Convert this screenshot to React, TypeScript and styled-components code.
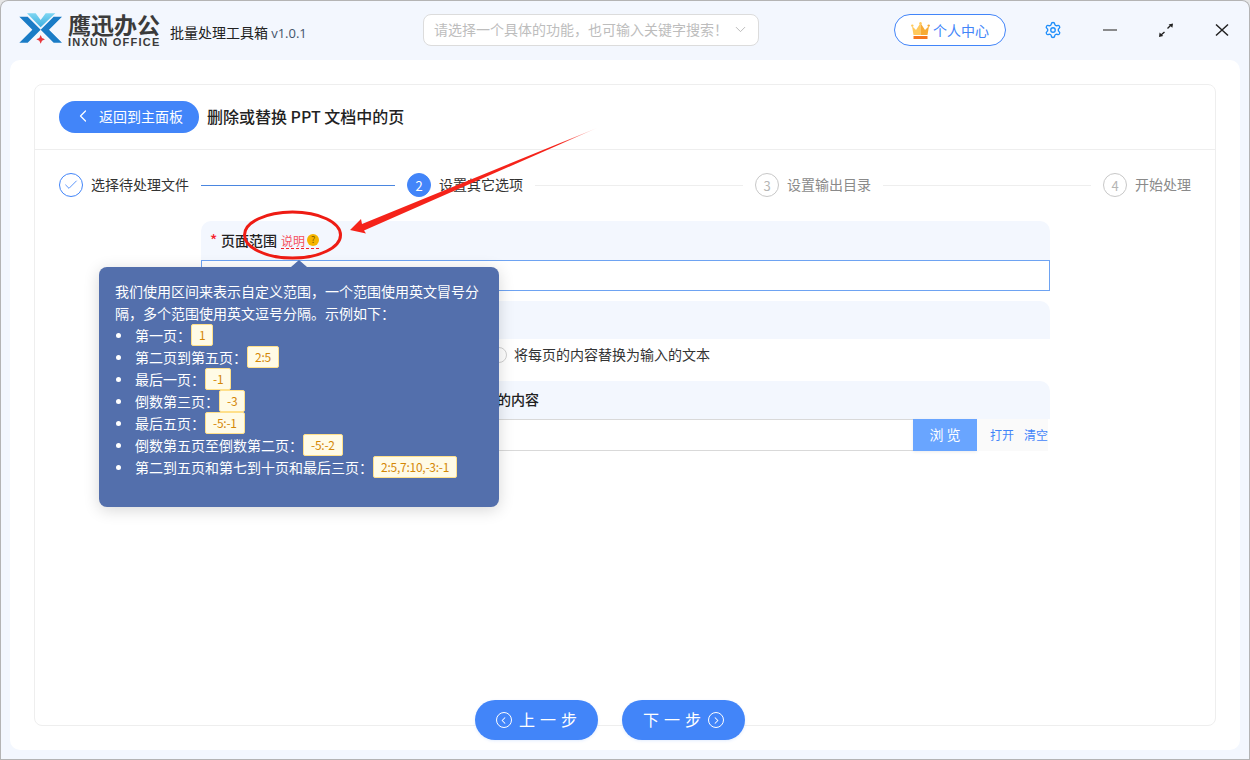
import React from "react";
import styled, { createGlobalStyle } from "styled-components";
import { Settings, ChevronLeft, ChevronRight, ChevronDown, Check } from "lucide-react";

const Global = createGlobalStyle`
  html, body { margin: 0; padding: 0; background: #e6e6e6; }
  body { font-family: "Noto Sans CJK SC", "Noto Sans", sans-serif; color: #333; }
  * { box-sizing: border-box; }
`;

const Window = styled.div`
  position: relative;
  width: 1250px;
  height: 760px;
  overflow: hidden;
  display: flex;
  flex-direction: column;
  background: #f3f7fe;
  border-radius: 8px 8px 0 0;
  box-shadow: inset 0 0 0 1px #b4b4b4;
`;

const TopBar = styled.header`
  height: 60px;
  flex: none;
  display: flex;
  align-items: center;
  padding-left: 17px;
`;

const Brand = styled.div`
  display: flex;
  align-items: center;
  gap: 3px;
  margin-top: -1px;
`;

const BrandText = styled.div`
  display: flex;
  flex-direction: column;
  width: 92px;
`;

const BrandName = styled.span`
  font-size: 23px;
  line-height: 25px;
  font-weight: 700;
  color: #3b3b3b;
`;

const BrandSub = styled.span`
  font-family: "Liberation Sans", sans-serif;
  font-size: 11px;
  line-height: 10px;
  font-weight: 700;
  letter-spacing: 1.25px;
  color: #3b3b3b;
  white-space: nowrap;
`;

const AppTitle = styled.div`
  margin-left: 10px;
  margin-top: 4px;
  width: 137px;
  font-size: 14px;
  color: #222;
  white-space: nowrap;
`;

const Version = styled.span`
  font-family: "Open Sans", sans-serif;
  font-size: 13px;
  color: #44546a;
`;

const Search = styled.div`
  margin-left: 116px;
  width: 336px;
  height: 32px;
  display: flex;
  align-items: center;
  justify-content: space-between;
  padding: 0 9px 2px 10px;
  background: #fff;
  border: 1px solid #dcdcdc;
  border-radius: 8px;
  font-size: 14px;
  color: #bdbdbd;
  white-space: nowrap;
`;

const Profile = styled.button`
  margin-left: 135px;
  width: 112px;
  height: 32px;
  padding: 0 0 0 16px;
  display: flex;
  align-items: center;
  gap: 3px;
  background: #fff;
  border: 1px solid #4285f9;
  border-radius: 16px;
  color: #4285f9;
  font: inherit;
  font-size: 14px;
`;

const GearButton = styled.div`
  margin-left: 38px;
  width: 18px;
  height: 18px;
  display: flex;
  color: #1f8efa;
`;

const WinButton = styled.div`
  margin-left: 40px;
  width: 16px;
  height: 16px;
  display: flex;
`;

const Main = styled.main`
  flex: 1;
  min-height: 0;
  margin: 0 10px 10px;
  padding: 24px;
  display: flex;
  flex-direction: column;
  background: #fff;
  border-radius: 10px;
`;

const Card = styled.section`
  flex: 1;
  min-height: 0;
  border: 1px solid #eeeeee;
  border-radius: 8px;
  display: flex;
  flex-direction: column;
`;

const CardHead = styled.div`
  display: flex;
  align-items: center;
  gap: 8px;
  padding: 16px 24px;
  border-bottom: 1px solid #eeeeee;
`;

const BackButton = styled.button`
  width: 140px;
  height: 32px;
  display: flex;
  align-items: center;
  gap: 6px;
  padding: 0 0 2px 14px;
  background: #4285f9;
  color: #fff;
  border: 0;
  border-radius: 16px;
  font: inherit;
  font-size: 14px;
`;

const PageTitle = styled.h1`
  margin: 0;
  padding-bottom: 2px;
  font-size: 16px;
  line-height: 24px;
  font-weight: 500;
  color: #222;
  white-space: pre;
`;

const Steps = styled.div`
  display: flex;
  padding: 23px 24px 24px;
`;

const Step = styled.div<{ $last?: boolean }>`
  flex: ${(p) => (p.$last ? "none" : "1")};
  display: flex;
  align-items: center;
  gap: 8px;
  padding-right: ${(p) => (p.$last ? "0" : "12px")};
`;

const StepDot = styled.div<{ $state: "done" | "active" | "todo" }>`
  width: 24px;
  height: 24px;
  flex: none;
  display: flex;
  align-items: center;
  justify-content: center;
  border-radius: 50%;
  font-size: 13px;
  background: ${(p) => (p.$state === "active" ? "#4285f9" : "#fff")};
  color: ${(p) => (p.$state === "active" ? "#fff" : p.$state === "done" ? "#4285f9" : "#b5b5b5")};
  border: 1px solid ${(p) => (p.$state === "todo" ? "#c8c8c8" : "#4285f9")};
`;

const StepLabel = styled.span<{ $muted?: boolean }>`
  padding-bottom: 2px;
  font-size: 14px;
  line-height: 22px;
  white-space: nowrap;
  color: ${(p) => (p.$muted ? "#8a8a8a" : "#333")};
`;

const StepLine = styled.div<{ $on?: boolean }>`
  flex: 1;
  height: 1px;
  margin-left: 4px;
  background: ${(p) => (p.$on ? "#4a86e0" : "#eeeeee")};
`;

const Form = styled.div`
  width: 849px;
  margin-left: 166px;
  display: flex;
  flex-direction: column;
  gap: 10px;
`;

const Section = styled.div``;

const SectionHead = styled.div<{ $tall?: boolean; $indent?: number }>`
  height: ${(p) => (p.$tall ? "39px" : "38px")};
  display: flex;
  align-items: center;
  padding: 0 0 2px ${(p) => p.$indent ?? 9}px;
  background: #f3f7fe;
  border-radius: 10px 10px 0 0;
  font-size: 14px;
  font-weight: 500;
  color: #222;
  white-space: nowrap;
`;

const Star = styled.span`
  width: 11px;
  color: #f5222d;
  font-size: 15px;
`;

const Hint = styled.span`
  position: relative;
  margin-left: 4px;
  display: inline-flex;
  align-items: center;
  gap: 2px;
  height: 17px;
  margin-top: 2px;
  border-bottom: 1px dashed #f5222d;
  color: #f5515f;
  font-size: 12px;
  font-weight: 400;
`;

const HintIcon = styled.span`
  width: 12px;
  height: 12px;
  border-radius: 50%;
  background: #f5b400;
  color: #7a5a00;
  font-size: 9px;
  line-height: 12px;
  text-align: center;
`;

const Tip = styled.div`
  position: absolute;
  top: 35px;
  left: 50%;
  z-index: 5;
  width: 400px;
  height: 240px;
  margin-left: -201px;
  padding: 13px 16px 29px;
  background: #536fac;
  border-radius: 8px;
  box-shadow: 0 3px 16px rgba(0, 0, 0, 0.16);
  color: #fff;
  font-size: 14px;
  line-height: 22px;
  white-space: normal;

  &::before {
    content: "";
    position: absolute;
    top: -7px;
    left: 192px;
    border-left: 8px solid transparent;
    border-right: 8px solid transparent;
    border-bottom: 7px solid #536fac;
  }
`;

const TipList = styled.ul`
  margin: 0;
  padding: 0 0 0 20px;
  list-style: none;
`;

const TipItem = styled.li`
  display: flex;
  align-items: center;
  height: 22px;
  white-space: nowrap;

  &::before {
    content: "";
    flex: none;
    width: 5px;
    height: 5px;
    margin-left: -19px;
    margin-right: 14px;
    border-radius: 50%;
    background: #fff;
  }
`;

const Code = styled.code`
  display: inline-block;
  height: 22px;
  padding: 0 7px;
  font-family: inherit;
  font-size: 12px;
  line-height: 20px;
  letter-spacing: -0.25px;
  color: #d48806;
  background: #fffbe6;
  border: 1px solid #ffe08a;
  border-radius: 2px;
`;

const TextInput = styled.div`
  height: 31px;
  border: 1px solid #6ea3f2;
`;

const RadioRow = styled.div`
  height: 32px;
  display: flex;
  align-items: center;
  padding-left: 290px;
`;

const RadioOption = styled.label`
  display: flex;
  align-items: center;
  gap: 7px;
  font-size: 14px;
  color: #333;
`;

const RadioText = styled.span`
  padding-bottom: 2px;
`;

const RadioMark = styled.span`
  width: 16px;
  height: 16px;
  flex: none;
  border: 1px solid #d0d0d0;
  border-radius: 50%;
  background: #fff;
`;

const FileRow = styled.div`
  height: 32px;
  display: flex;
  padding-right: 2px;
`;

const FileInput = styled.div`
  flex: 1;
  border-top: 1px solid #d9d9d9;
  border-bottom: 1px solid #d9d9d9;
`;

const Browse = styled.button`
  width: 64px;
  border: 0;
  padding: 0 0 2px;
  background: #69a5ff;
  color: #fff;
  font: inherit;
  font-size: 14px;
  box-shadow: 0 1px 3px rgba(0, 0, 0, 0.08);
`;

const FileLinks = styled.div`
  width: 71px;
  display: flex;
  align-items: center;
  gap: 10px;
  padding: 0 0 2px 13px;
  background: #fafafa;
  color: #4285f9;
  font-size: 12px;
  white-space: nowrap;
`;

const Footer = styled.div`
  flex: none;
  height: 40px;
  margin: -26px 0 -14px 441px;
  display: flex;
  gap: 24px;
`;

const StepButton = styled.button`
  width: 123px;
  height: 40px;
  padding: 0;
  display: flex;
  align-items: center;
  justify-content: center;
  gap: 7px;
  background: #4285f9;
  color: #fff;
  border: 0;
  border-radius: 20px;
  font: inherit;
  font-size: 16px;
  letter-spacing: 5px;
  box-shadow: 0 1px 3px rgba(66, 133, 249, 0.15);
`;

const ButtonText = styled.span`
  margin-right: -5px;
  padding-bottom: 2px;
  line-height: 38px;
`;

const CircleIcon = styled.span`
  width: 16px;
  height: 16px;
  flex: none;
  display: flex;
  align-items: center;
  justify-content: center;
  border: 1.5px solid #fff;
  border-radius: 50%;
`;

const Annotations = styled.svg`
  position: absolute;
  inset: 0;
  z-index: 4;
  pointer-events: none;
`;

const Logo = () => (
  <svg width="48" height="40" viewBox="20 20 144 120" aria-hidden="true">
    <defs>
      <linearGradient id="lg" x1="0" y1="0" x2="0" y2="1">
        <stop offset="0" stopColor="#7fd6f2" />
        <stop offset="1" stopColor="#3aaee0" />
      </linearGradient>
    </defs>
    <path d="M27 40H52L91 79L52 118H27L66 79Z" fill="#1a7cc6" />
    <path d="M155 40H130L91 79L130 118H155L116 79Z" fill="#1a7cc6" />
    <path d="M50 30H76L91 50L106 30H135L91 72Z" fill="url(#lg)" />
    <path d="M91 95L95 104L104 108L95 112L91 121L87 112L78 108L87 104Z" fill="#e8383d" />
  </svg>
);

const Crown = () => (
  <svg width="19" height="17" viewBox="0 0 19 17" aria-hidden="true">
    <path d="M1 4L5 8L9.5 1L9.5 13H2.5Z" fill="#ffc95c" />
    <path d="M18 4L14 8L9.5 1L9.5 13H16.5Z" fill="#f7ab35" />
    <circle cx="1.3" cy="3.6" r="1.2" fill="#ffc95c" />
    <circle cx="9.5" cy="1.3" r="1.2" fill="#ffc95c" />
    <circle cx="17.7" cy="3.6" r="1.2" fill="#f7ab35" />
    <rect x="2.5" y="14" width="14" height="3" fill="#f5761f" />
  </svg>
);

const MaximizeIcon = () => (
  <svg width="16" height="16" viewBox="0 0 16 16" aria-hidden="true">
    <path d="M3 13L6.5 10M9.5 6.5L13 3" stroke="#222" strokeWidth="1.4" fill="none" />
    <path d="M1 15L1.6 10.6L5.2 14Z" fill="#222" />
    <path d="M15 1.4L14.4 5.8L10.6 2.4Z" fill="#222" />
  </svg>
);

const MinimizeIcon = () => (
  <svg width="16" height="16" viewBox="0 0 16 16" aria-hidden="true">
    <path d="M1 8H15" stroke="#666" strokeWidth="1.6" />
  </svg>
);

const CloseIcon = () => (
  <svg width="16" height="16" viewBox="0 0 16 16" aria-hidden="true">
    <path d="M2 2.5L14 13.5M14 2.5L2 13.5" stroke="#222" strokeWidth="1.5" />
  </svg>
);

const tipRows: [string, string][] = [
  ["第一页：", "1"],
  ["第二页到第五页：", "2:5"],
  ["最后一页：", "-1"],
  ["倒数第三页：", "-3"],
  ["最后五页：", "-5:-1"],
  ["倒数第五页至倒数第二页：", "-5:-2"],
  ["第二到五页和第七到十页和最后三页：", "2:5,7:10,-3:-1"],
];

export default function App() {
  return (
    <>
      <Global />
      <Window>
        <TopBar>
          <Brand>
            <Logo />
            <BrandText>
              <BrandName>鹰迅办公</BrandName>
              <BrandSub>INXUN OFFICE</BrandSub>
            </BrandText>
          </Brand>
          <AppTitle>
            批量处理工具箱 <Version>v1.0.1</Version>
          </AppTitle>
          <Search>
            <span>请选择一个具体的功能，也可输入关键字搜索！</span>
            <ChevronDown size={17} strokeWidth={1.3} color="#b5b5b5" />
          </Search>
          <Profile>
            <Crown />
            <span>个人中心</span>
          </Profile>
          <GearButton>
            <Settings size={18} strokeWidth={1.8} />
          </GearButton>
          <WinButton>
            <MinimizeIcon />
          </WinButton>
          <WinButton>
            <MaximizeIcon />
          </WinButton>
          <WinButton>
            <CloseIcon />
          </WinButton>
        </TopBar>
        <Main>
          <Card>
            <CardHead>
              <BackButton>
                <ChevronLeft size={20} strokeWidth={1.5} />
                <span>返回到主面板</span>
              </BackButton>
              <PageTitle>删除或替换 PPT 文档中的页</PageTitle>
            </CardHead>
            <Steps>
              <Step>
                <StepDot $state="done">
                  <Check size={16} strokeWidth={1.3} />
                </StepDot>
                <StepLabel>选择待处理文件</StepLabel>
                <StepLine $on />
              </Step>
              <Step>
                <StepDot $state="active">2</StepDot>
                <StepLabel>设置其它选项</StepLabel>
                <StepLine />
              </Step>
              <Step>
                <StepDot $state="todo">3</StepDot>
                <StepLabel $muted>设置输出目录</StepLabel>
                <StepLine />
              </Step>
              <Step $last>
                <StepDot $state="todo">4</StepDot>
                <StepLabel $muted>开始处理</StepLabel>
              </Step>
            </Steps>
            <Form>
              <Section>
                <SectionHead $tall>
                  <Star>*</Star>
                  页面范围
                  <Hint>
                    说明
                    <HintIcon>?</HintIcon>
                    <Tip>
                      我们使用区间来表示自定义范围，一个范围使用英文冒号分隔，多个范围使用英文逗号分隔。示例如下：
                      <TipList>
                        {tipRows.map(([label, code]) => (
                          <TipItem key={code}>
                            {label}
                            <Code>{code}</Code>
                          </TipItem>
                        ))}
                      </TipList>
                    </Tip>
                  </Hint>
                </SectionHead>
                <TextInput />
              </Section>
              <Section>
                <SectionHead />
                <RadioRow>
                  <RadioOption>
                    <RadioMark />
                    <RadioText>将每页的内容替换为输入的文本</RadioText>
                  </RadioOption>
                </RadioRow>
              </Section>
              <Section>
                <SectionHead $indent={296}>的内容</SectionHead>
                <FileRow>
                  <FileInput />
                  <Browse>浏 览</Browse>
                  <FileLinks>
                    <span>打开</span>
                    <span>清空</span>
                  </FileLinks>
                </FileRow>
              </Section>
            </Form>
          </Card>
          <Footer>
            <StepButton>
              <CircleIcon>
                <ChevronLeft size={11} strokeWidth={2.2} />
              </CircleIcon>
              <ButtonText>上一步</ButtonText>
            </StepButton>
            <StepButton>
              <ButtonText>下一步</ButtonText>
              <CircleIcon>
                <ChevronRight size={11} strokeWidth={2.2} />
              </CircleIcon>
            </StepButton>
          </Footer>
        </Main>
        <Annotations width="1250" height="760" viewBox="0 0 1250 760" aria-hidden="true">
          <defs>
            <linearGradient id="arrowFade" gradientUnits="userSpaceOnUse" x1="350" y1="230" x2="597" y2="128">
              <stop offset="0" stopColor="#f5231a" />
              <stop offset="0.85" stopColor="#f5231a" />
              <stop offset="1" stopColor="#f5231a" stopOpacity="0.15" />
            </linearGradient>
          </defs>
          <ellipse cx="292.5" cy="235" rx="48" ry="23" fill="none" stroke="#ee1c14" strokeWidth="3" />
          <polygon points="350,230 361,219 362,224 597,128 364,230.5 366,233.5" fill="url(#arrowFade)" />
        </Annotations>
      </Window>
    </>
  );
}
